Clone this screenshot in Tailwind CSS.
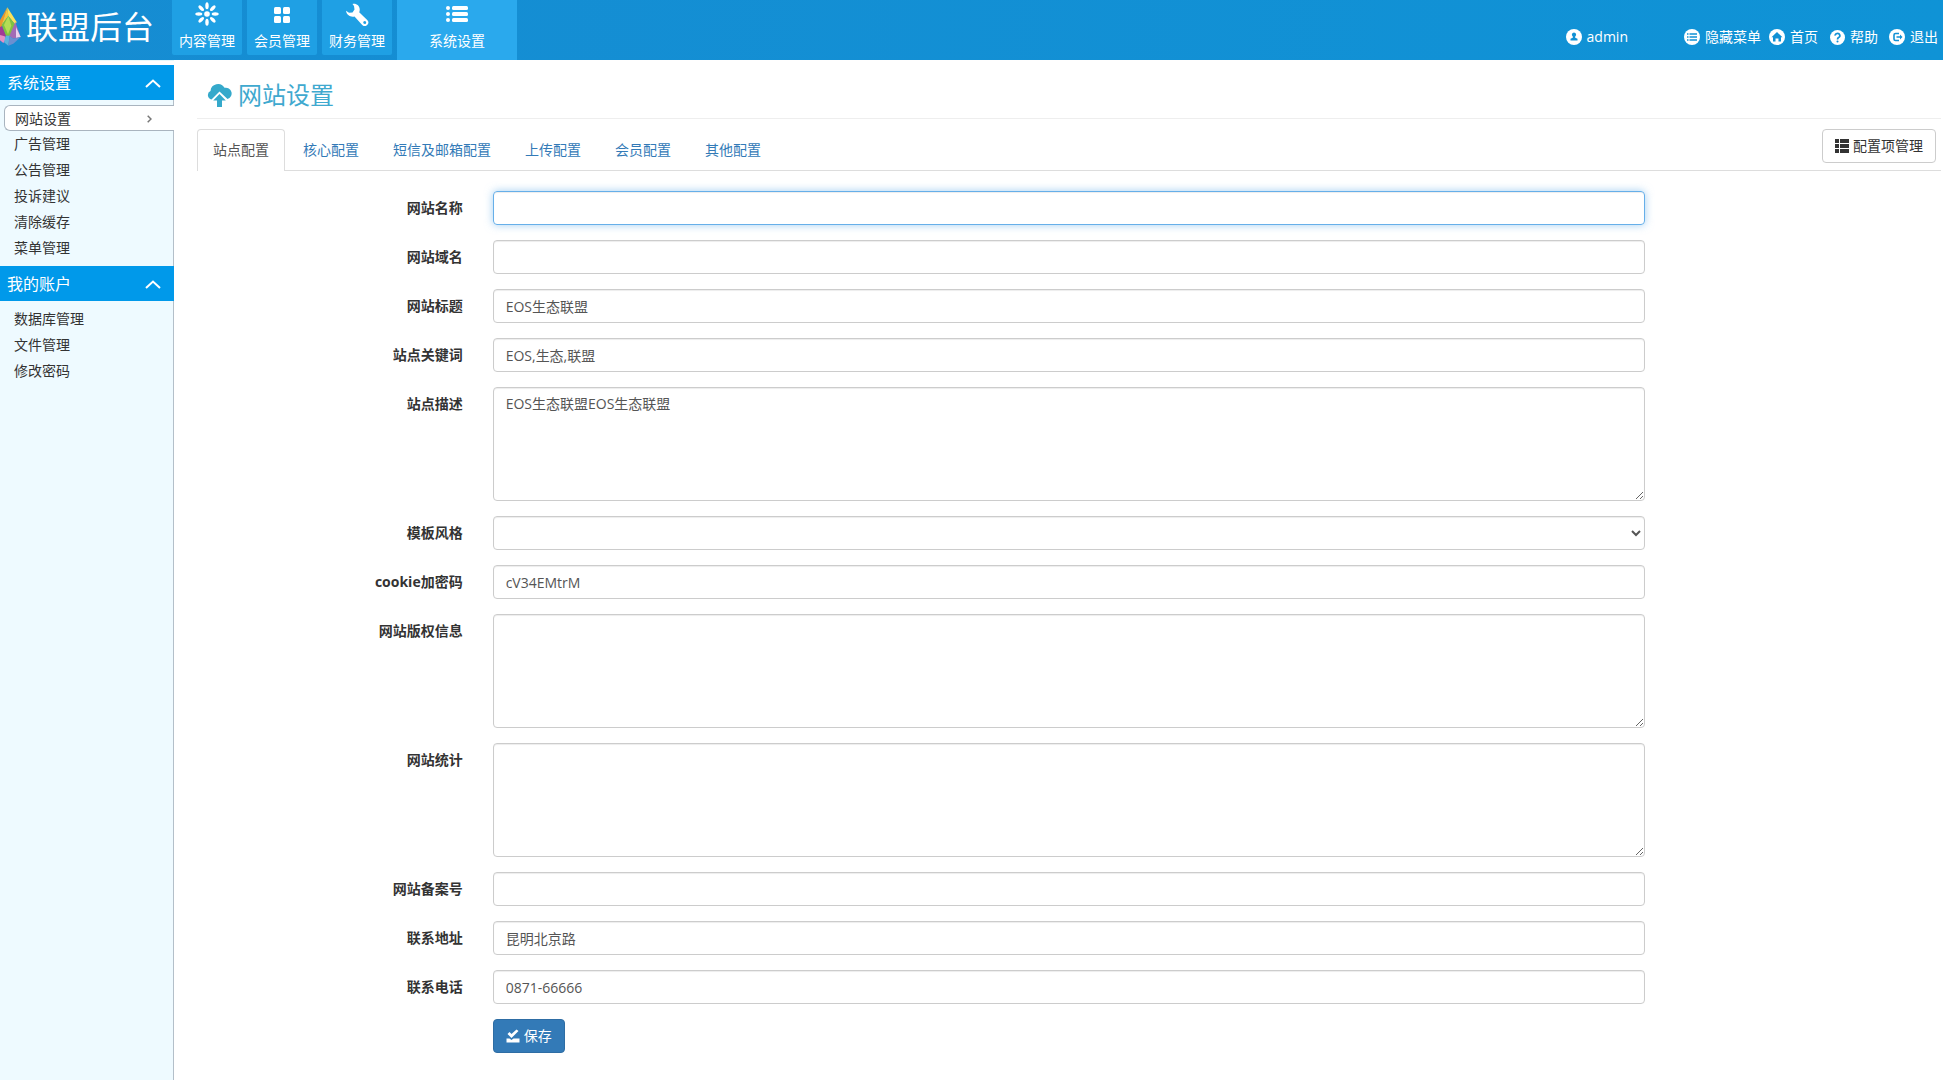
<!DOCTYPE html>
<html lang="zh-CN">
<head>
<meta charset="utf-8">
<meta name="viewport" content="width=device-width, initial-scale=1">
<title>联盟后台</title>
<script src="https://cdn.jsdelivr.net/npm/@tailwindcss/browser@4"></script>
</head>
<body class="flex min-h-screen flex-col overflow-x-hidden bg-white font-['Open_Sans','Noto_Sans_CJK_SC',sans-serif] text-sm text-[#333]">
<header class="flex h-[60px] shrink-0 bg-linear-to-r from-[#168cd2] to-[#0f93d6] text-white">
  <h1 class="flex w-[172px] shrink-0 items-center gap-[5px] pb-[6px] text-[32px] leading-10">
    <svg class="h-10 w-[21px]" viewBox="0 0 63 120" aria-hidden="true">
      <path d="M22 1 0 40v30l5-12z" fill="#e9962e"/><path d="M22 1 5 55l20-28z" fill="#f9c53a"/><path d="M22 1l3 26 21 26 4-8z" fill="#fbe25a"/>
      <path d="M25 27 5 54l12 32 12 1 17-34z" fill="#7fc241"/><path d="M25 27 12 54l12 28 10-26z" fill="#b5dc55"/>
      <path d="M46 45l16 45-22 5-12-8z" fill="#a36bb5"/><path d="M48 60l14 30-14 2z" fill="#ead3ee"/>
      <path d="M0 60l6-2 12 29-6 20-12-8z" fill="#a23a94"/><path d="M0 84l14 4 4 8-8 12L0 100z" fill="#e58fc4"/>
      <path d="M17 86h12l-4 30-13-10z" fill="#5cb3dd"/><path d="M29 87l11 8 22-5-22 20-15 6z" fill="#6b8fd0"/>
    </svg>联盟后台
  </h1>
  <nav class="flex gap-[5px]">
    <a href="#" class="flex h-[55px] w-[70px] flex-col items-center rounded-b-xs bg-[#1fa0e4] pt-[2px]">
      <svg class="size-6" viewBox="0 0 24 24" fill="currentColor" aria-hidden="true"><circle cx="12" cy="12" r="2.800"/><g id="ray"><ellipse cx="12" cy="3.800" rx="1.700" ry="3.500"/><ellipse cx="12" cy="20.200" rx="1.700" ry="3.500"/></g><use href="#ray" transform="rotate(45 12 12)"/><use href="#ray" transform="rotate(90 12 12)"/><use href="#ray" transform="rotate(135 12 12)"/></svg>
      <span class="mt-[5px] leading-5">内容管理</span></a>
    <a href="#" class="flex h-[55px] w-[70px] flex-col items-center rounded-b-xs bg-[#1fa0e4] pt-[2px]">
      <svg class="size-6" viewBox="0 0 24 24" fill="currentColor" aria-hidden="true"><rect x="4" y="5" width="7" height="7" rx="1.500"/><rect x="13" y="5" width="7" height="7" rx="1.500"/><rect x="4" y="14" width="7" height="7" rx="1.500"/><rect x="13" y="14" width="7" height="7" rx="1.500"/></svg>
      <span class="mt-[5px] leading-5">会员管理</span></a>
    <a href="#" class="flex h-[55px] w-[70px] flex-col items-center rounded-b-xs bg-[#1fa0e4] pt-[2px]">
      <svg class="size-6" viewBox="0 0 24 24" fill="currentColor" aria-hidden="true"><path fill-rule="evenodd" d="M7.500 2c4-.8 7.500 2 7.200 6 0 .8-.2 1.500-.5 2.200l8 7.800a3.500 3.500 0 0 1-5 5L9.500 14.500c-4 1-8-1.500-8.500-5.700l3 2 3.500-.3L9.500 7.500 9 4zM19.700 19a1.500 1.500 0 1 0 .01 3 1.500 1.500 0 0 0 0-3z"/></svg>
      <span class="mt-[5px] leading-5">财务管理</span></a>
    <a href="#" aria-current="page" class="flex h-[60px] w-[120px] flex-col items-center bg-[#2aa9ed] pt-[2px]">
      <svg class="size-6" viewBox="0 0 24 24" fill="currentColor" aria-hidden="true"><circle cx="3" cy="6" r="2"/><circle cx="3" cy="12" r="2"/><circle cx="3" cy="18" r="2"/><rect x="7" y="4" width="16" height="4" rx="1.500"/><rect x="7" y="10" width="16" height="4" rx="1.500"/><rect x="7" y="16" width="16" height="4" rx="1.500"/></svg>
      <span class="mt-[5px] leading-5">系统设置</span></a>
  </nav>
  <div class="ml-auto flex items-center gap-2 pt-[14px] pr-[5px] leading-5">
    <a href="#" class="mr-12 flex items-center gap-[5px]"><svg class="size-4" viewBox="0 0 16 16" aria-hidden="true"><circle cx="8" cy="8" r="8" fill="#fff"/><path d="M8 3.500a2.200 2.200 0 0 1 1.200 4v1.200l2.300 1v1.800h-7V9.700l2.300-1V7.500A2.200 2.200 0 0 1 8 3.500z" fill="#1191d5"/></svg>admin</a>
    <a href="#" class="flex items-center gap-[5px]"><svg class="size-4" viewBox="0 0 16 16" aria-hidden="true"><circle cx="8" cy="8" r="8" fill="#fff"/><path d="M3 5h1.500M5.500 5H13M3 8h1.500M5.500 8H13M3 11h1.500M5.500 11H13" stroke="#1191d5" stroke-width="1.300"/></svg>隐藏菜单</a>
    <a href="#" class="flex items-center gap-[5px]"><svg class="size-4" viewBox="0 0 16 16" aria-hidden="true"><circle cx="8" cy="8" r="8" fill="#fff"/><path d="M8 3l5.500 5.300H12v4.200H9.500V9.500h-3v3H4V8.300H2.500z" fill="#1191d5"/></svg>首页</a>
    <a href="#" class="ml-1 flex items-center gap-[5px]"><svg class="size-[15px]" viewBox="0 0 16 16" aria-hidden="true"><circle cx="8" cy="8" r="8" fill="#fff"/><path d="M5.500 6a2.500 2.300 0 1 1 3.700 2Q8 8.700 8 10" fill="none" stroke="#1191d5" stroke-width="1.800"/><circle cx="8" cy="12.200" r="1.100" fill="#1191d5"/></svg>帮助</a>
    <a href="#" class="ml-[3px] flex items-center gap-[5px]"><svg class="size-4" viewBox="0 0 16 16" aria-hidden="true"><circle cx="8" cy="8" r="8" fill="#fff"/><path d="M10 4.500H6.500Q5 4.500 5 6v4q0 1.500 1.500 1.500H10M7.500 8H12" fill="none" stroke="#1191d5" stroke-width="1.600"/><path d="M11 5.500 13.500 8 11 10.500z" fill="#1191d5"/></svg>退出</a>
  </div>
</header>
<div class="flex flex-1">
  <aside class="w-[174px] shrink-0 border-t border-[#e3f8fd] pt-1">
    <div class="flex h-full flex-col border-r border-[#b3bfc9] bg-[#eefaff]">
    <button type="button" class="-mr-px flex h-[35px] items-center justify-between bg-[#0099ea] pt-px pr-[13px] pl-[7px] text-base text-white">系统设置<svg class="h-[9px] w-4" viewBox="0 0 16 9" fill="none" stroke="#fff" stroke-width="2" aria-hidden="true"><path d="M1 8l7-6.500L15 8"/></svg></button>
    <ul class="mb-[5px] pt-[5px]">
      <li class="-mr-px"><a href="#" aria-current="page" class="ml-1 flex h-[26px] items-center justify-between rounded-l-md border border-r-0 border-[#a9b4bf] bg-white pt-px pr-[22px] pl-[10px]">网站设置<svg class="h-2 w-[5px]" viewBox="0 0 5 8" fill="none" stroke="#777" stroke-width="1.500" aria-hidden="true"><path d="M.7.7 4 4 .7 7.300"/></svg></a></li>
      <li><a href="#" class="block h-[26px] pl-[14px] leading-[26px]">广告管理</a></li>
      <li><a href="#" class="block h-[26px] pl-[14px] leading-[26px]">公告管理</a></li>
      <li><a href="#" class="block h-[26px] pl-[14px] leading-[26px]">投诉建议</a></li>
      <li><a href="#" class="block h-[26px] pl-[14px] leading-[26px]">清除缓存</a></li>
      <li><a href="#" class="block h-[26px] pl-[14px] leading-[26px]">菜单管理</a></li>
    </ul>
    <button type="button" class="-mr-px flex h-[35px] items-center justify-between bg-[#0099ea] pt-px pr-[13px] pl-[7px] text-base text-white">我的账户<svg class="h-[9px] w-4" viewBox="0 0 16 9" fill="none" stroke="#fff" stroke-width="2" aria-hidden="true"><path d="M1 8l7-6.500L15 8"/></svg></button>
    <ul class="pt-[5px]">
      <li><a href="#" class="block h-[26px] pl-[14px] leading-[26px]">数据库管理</a></li>
      <li><a href="#" class="block h-[26px] pl-[14px] leading-[26px]">文件管理</a></li>
      <li><a href="#" class="block h-[26px] pl-[14px] leading-[26px]">修改密码</a></li>
    </ul>
    </div>
  </aside>
  <main class="min-w-0 flex-1 pt-5 pr-[2px] pb-[27px] pl-[23px]">
    <h2 class="flex h-[39px] items-start gap-[6px] border-b border-[#eee] pl-[10px] text-2xl leading-[30px] text-[#3fa9cf]">
      <svg class="mt-[3px] h-6 w-[25px] text-[#35a9cb]" viewBox="0 0 25 24" fill="currentColor" aria-hidden="true"><path d="M4.500 16.500A4.500 4.500 0 0 1 3.500 8 7.500 7.500 0 0 1 17.500 4.800 5.800 5.800 0 0 1 20.500 16l-8-7.500z"/><path d="M12.500 11l6.300 6.500H15V24h-5v-6.500H6.200z"/></svg>网站设置
    </h2>
    <div class="mt-[10px] flex items-start justify-between border-b border-[#ddd] pr-[5px]">
      <ul class="-mb-px flex gap-[2px] leading-5 text-[#337ab7]">
        <li><a href="#" aria-current="page" class="block rounded-t border border-b-0 border-[#ddd] bg-white px-[15px] pt-[10px] pb-[11px] text-[#555]">站点配置</a></li>
        <li><a href="#" class="block px-4 py-[11px]">核心配置</a></li>
        <li><a href="#" class="block px-4 py-[11px]">短信及邮箱配置</a></li>
        <li><a href="#" class="block px-4 py-[11px]">上传配置</a></li>
        <li><a href="#" class="block px-4 py-[11px]">会员配置</a></li>
        <li><a href="#" class="block px-4 py-[11px]">其他配置</a></li>
      </ul>
      <button type="button" class="flex h-[34px] items-center gap-1 rounded border border-[#ccc] px-3"><svg class="size-[14px]" viewBox="0 0 14 14" fill="#333" aria-hidden="true"><path d="M0 0h4v4H0zM5 0h9v4H5zM0 5h4v4H0zM5 5h9v4H5zM0 10h4v4H0zM5 10h9v4H5z"/></svg>配置项管理</button>
    </div>
    <form class="-mx-[15px] mt-5 flex flex-col gap-[15px] leading-5 text-[#555]">
      <div class="grid grid-cols-12"><label for="f1" class="col-span-2 px-[15px] pt-[7px] text-right font-bold text-[#333]">网站名称</label><div class="col-span-8 flex px-[15px]"><input id="f1" type="text" class="h-[34px] w-full rounded border border-[#66afe9] px-3 shadow-[inset_0_1px_1px_rgba(0,0,0,0.075),0_0_8px_rgba(102,175,233,0.6)] outline-none"></div></div>
      <div class="grid grid-cols-12"><label for="f2" class="col-span-2 px-[15px] pt-[7px] text-right font-bold text-[#333]">网站域名</label><div class="col-span-8 flex px-[15px]"><input id="f2" type="text" class="h-[34px] w-full rounded border border-[#ccc] px-3 shadow-[inset_0_1px_1px_rgba(0,0,0,0.075)]"></div></div>
      <div class="grid grid-cols-12"><label for="f3" class="col-span-2 px-[15px] pt-[7px] text-right font-bold text-[#333]">网站标题</label><div class="col-span-8 flex px-[15px]"><input id="f3" type="text" value="EOS生态联盟" class="h-[34px] w-full rounded border border-[#ccc] px-3 shadow-[inset_0_1px_1px_rgba(0,0,0,0.075)]"></div></div>
      <div class="grid grid-cols-12"><label for="f4" class="col-span-2 px-[15px] pt-[7px] text-right font-bold text-[#333]">站点关键词</label><div class="col-span-8 flex px-[15px]"><input id="f4" type="text" value="EOS,生态,联盟" class="h-[34px] w-full rounded border border-[#ccc] px-3 shadow-[inset_0_1px_1px_rgba(0,0,0,0.075)]"></div></div>
      <div class="grid grid-cols-12"><label for="f5" class="col-span-2 px-[15px] pt-[7px] text-right font-bold text-[#333]">站点描述</label><div class="col-span-8 flex px-[15px]"><textarea id="f5" class="h-[114px] w-full resize rounded border border-[#ccc] px-3 py-[6px] shadow-[inset_0_1px_1px_rgba(0,0,0,0.075)]">EOS生态联盟EOS生态联盟</textarea></div></div>
      <div class="grid grid-cols-12"><label for="f6" class="col-span-2 px-[15px] pt-[7px] text-right font-bold text-[#333]">模板风格</label><div class="col-span-8 flex px-[15px]"><select id="f6" class="h-[34px] w-full rounded border border-[#ccc] bg-white px-[5px] shadow-[inset_0_1px_1px_rgba(0,0,0,0.075)]"><option></option></select></div></div>
      <div class="grid grid-cols-12"><label for="f7" class="col-span-2 px-[15px] pt-[7px] text-right font-bold text-[#333]">cookie加密码</label><div class="col-span-8 flex px-[15px]"><input id="f7" type="text" value="cV34EMtrM" class="h-[34px] w-full rounded border border-[#ccc] px-3 shadow-[inset_0_1px_1px_rgba(0,0,0,0.075)]"></div></div>
      <div class="grid grid-cols-12"><label for="f8" class="col-span-2 px-[15px] pt-[7px] text-right font-bold text-[#333]">网站版权信息</label><div class="col-span-8 flex px-[15px]"><textarea id="f8" class="h-[114px] w-full resize rounded border border-[#ccc] px-3 py-[6px] shadow-[inset_0_1px_1px_rgba(0,0,0,0.075)]"></textarea></div></div>
      <div class="grid grid-cols-12"><label for="f9" class="col-span-2 px-[15px] pt-[7px] text-right font-bold text-[#333]">网站统计</label><div class="col-span-8 flex px-[15px]"><textarea id="f9" class="h-[114px] w-full resize rounded border border-[#ccc] px-3 py-[6px] shadow-[inset_0_1px_1px_rgba(0,0,0,0.075)]"></textarea></div></div>
      <div class="grid grid-cols-12"><label for="f10" class="col-span-2 px-[15px] pt-[7px] text-right font-bold text-[#333]">网站备案号</label><div class="col-span-8 flex px-[15px]"><input id="f10" type="text" class="h-[34px] w-full rounded border border-[#ccc] px-3 shadow-[inset_0_1px_1px_rgba(0,0,0,0.075)]"></div></div>
      <div class="grid grid-cols-12"><label for="f11" class="col-span-2 px-[15px] pt-[7px] text-right font-bold text-[#333]">联系地址</label><div class="col-span-8 flex px-[15px]"><input id="f11" type="text" value="昆明北京路" class="h-[34px] w-full rounded border border-[#ccc] px-3 shadow-[inset_0_1px_1px_rgba(0,0,0,0.075)]"></div></div>
      <div class="grid grid-cols-12"><label for="f12" class="col-span-2 px-[15px] pt-[7px] text-right font-bold text-[#333]">联系电话</label><div class="col-span-8 flex px-[15px]"><input id="f12" type="text" value="0871-66666" class="h-[34px] w-full rounded border border-[#ccc] px-3 shadow-[inset_0_1px_1px_rgba(0,0,0,0.075)]"></div></div>
      <div class="grid grid-cols-12"><div class="col-span-8 col-start-3 px-[15px]"><button type="submit" class="flex h-[34px] items-center gap-1 rounded border border-[#2e6da4] bg-[#337ab7] px-3 text-white"><svg class="size-[14px]" viewBox="0 0 14 14" fill="currentColor" aria-hidden="true"><path d="M1.500 5l2-2 2 2 5-4.500 2 1.500L5.500 9zM.5 9.500h3l2 1.500 2-1.500h6v4H.5z"/></svg>保存</button></div></div>
    </form>
  </main>
</div>
</body>
</html>
